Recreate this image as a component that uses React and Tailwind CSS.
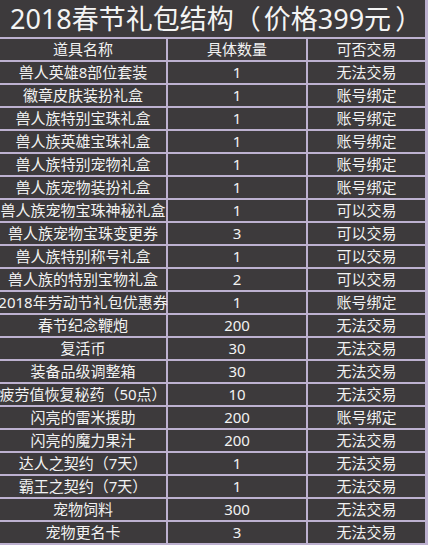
import React from "react";

const rows = [
  ["兽人英雄8部位套装", "1", "无法交易"],
  ["徽章皮肤装扮礼盒", "1", "账号绑定"],
  ["兽人族特别宝珠礼盒", "1", "账号绑定"],
  ["兽人族英雄宝珠礼盒", "1", "账号绑定"],
  ["兽人族特别宠物礼盒", "1", "账号绑定"],
  ["兽人族宠物装扮礼盒", "1", "账号绑定"],
  ["兽人族宠物宝珠神秘礼盒", "1", "可以交易"],
  ["兽人族宠物宝珠变更券", "3", "可以交易"],
  ["兽人族特别称号礼盒", "1", "可以交易"],
  ["兽人族的特别宝物礼盒", "2", "可以交易"],
  ["2018年劳动节礼包优惠券", "1", "账号绑定"],
  ["春节纪念鞭炮", "200", "无法交易"],
  ["复活币", "30", "无法交易"],
  ["装备品级调整箱", "30", "无法交易"],
  ["疲劳值恢复秘药（50点）", "10", "无法交易"],
  ["闪亮的雷米援助", "200", "账号绑定"],
  ["闪亮的魔力果汁", "200", "无法交易"],
  ["达人之契约（7天）", "1", "无法交易"],
  ["霸王之契约（7天）", "1", "无法交易"],
  ["宠物饲料", "300", "无法交易"],
  ["宠物更名卡", "3", "无法交易"],
];

const Cell = ({ children }) => (
  <div className="flex h-[21px] items-center justify-center whitespace-nowrap bg-[#3d3a3c] text-[15px] leading-none text-[#f2f2f2]">
    {children}
  </div>
);

export default function App() {
  return (
    <div
      className="w-[428px] h-[545px] overflow-hidden bg-[#bdb1d0]"
      style={{ fontFamily: '"Noto Sans", "Noto Sans CJK SC", sans-serif' }}
    >
      <div className="grid grid-cols-[166px_138px_117px] gap-[2px] pr-[3px] pb-[2px]">
        {/* title */}
        <div className="col-span-3 flex h-[37px] items-center bg-[#3d3a3c] pl-[10px] text-[27px] leading-none text-[#f4f4f4] whitespace-nowrap">
          2018春节礼包结构<span className="mr-[3px]">（</span>价格399元<span className="ml-[4px]">）</span>
        </div>
        <Cell>道具名称</Cell>
        <Cell>具体数量</Cell>
        <Cell>可否交易</Cell>
        {rows.map(([name, qty, trade], i) => (
          <React.Fragment key={i}>
            <Cell>{name}</Cell>
            <Cell>{qty}</Cell>
            <Cell>{trade}</Cell>
          </React.Fragment>
        ))}
      </div>
    </div>
  );
}
